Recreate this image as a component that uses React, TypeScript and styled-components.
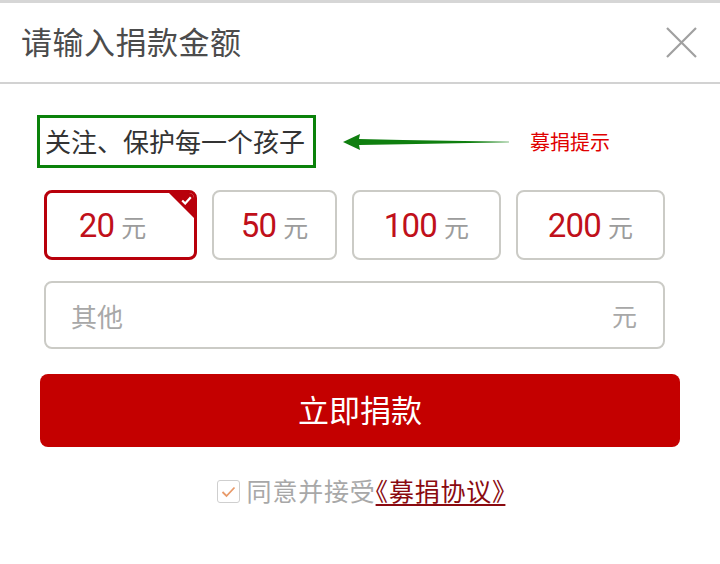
import React, { useState } from "react";
import styled, { createGlobalStyle } from "styled-components";

const GlobalStyle = createGlobalStyle`
  body {
    margin: 0;
    background: #fff;
    font-family: "Noto Sans CJK SC", "Noto Sans", sans-serif;
  }
`;

const Page = styled.div`
  width: 720px;
  height: 564px;
  background: #fff;
  border-top: 3px solid #d6d6d6;
  box-sizing: border-box;
  overflow: hidden;
`;

const Header = styled.div`
  display: flex;
  align-items: center;
  justify-content: space-between;
  height: 79px;
  padding: 0 22px 0 21px;
  border-bottom: 2px solid #d2d2d2;
`;

const Title = styled.h1`
  margin: -5px 0 0 0;
  font-size: 31px;
  font-weight: 400;
  color: #4c4c4c;
  letter-spacing: 0.5px;
`;

const CloseButton = styled.button`
  width: 34px;
  height: 34px;
  padding: 0;
  border: none;
  background: none;
  display: flex;
  align-items: center;
  justify-content: center;
`;

const Body = styled.div`
  display: flex;
  flex-direction: column;
  padding-top: 31px;
`;

const HintRow = styled.div`
  display: flex;
  align-items: center;
  padding-left: 37px;
  height: 53px;
`;

const HintBox = styled.div`
  box-sizing: border-box;
  height: 53px;
  width: 279px;
  border: 3px solid #0a820a;
  display: flex;
  align-items: center;
  padding: 0 0 2px 5px;
  font-size: 26px;
  color: #333;
  white-space: nowrap;
`;

const ArrowWrap = styled.div`
  margin-left: 27px;
  display: flex;
  align-items: center;
`;

const HintLabel = styled.span`
  margin-left: 19px;
  font-size: 20px;
  color: #e00000;
`;

const AmountGrid = styled.div`
  display: grid;
  grid-template-columns: 153px 125px 149px 149px;
  gap: 15px;
  padding-left: 44px;
  margin-top: 22px;
`;

const AmountButton = styled.button<{ $active?: boolean }>`
  position: relative;
  box-sizing: border-box;
  height: 70px;
  border-radius: 8px;
  border: ${(p) => (p.$active ? "3px solid #b8000b" : "2px solid #cbcbc6")};
  background: #fff;
  display: flex;
  align-items: center;
  justify-content: center;
  gap: 7px;
  padding: 0 ${(p) => (p.$active ? "16px" : "0")} 0 0;
  overflow: hidden;
  cursor: pointer;
  font-family: inherit;
`;

const Num = styled.span`
  font-family: Roboto, "Liberation Sans", sans-serif;
  font-size: 33px;
  color: #c0101a;
  letter-spacing: -0.8px;
  line-height: 1;
`;

const Unit = styled.span`
  font-size: 25px;
  color: #9c9c9c;
  line-height: 1;
  margin-top: 3px;
`;

const Corner = styled.span`
  position: absolute;
  top: -1px;
  right: -1px;
  width: 0;
  height: 0;
  border-top: 27px solid #b8000b;
  border-left: 27px solid transparent;
`;

const CornerCheck = styled.svg`
  position: absolute;
  top: 3px;
  right: 2px;
`;

const OtherField = styled.label`
  box-sizing: border-box;
  margin: 21px 55px 0 44px;
  height: 68px;
  border: 2px solid #cbcbc6;
  border-radius: 8px;
  display: flex;
  align-items: center;
  padding: 0 26px 0 23px;
`;

const OtherInput = styled.input`
  flex: 1;
  border: none;
  outline: none;
  font-family: inherit;
  font-size: 26px;
  color: #333;
  background: transparent;
  &::placeholder {
    color: #a8a8a8;
  }
`;

const OtherUnit = styled.span`
  font-size: 25px;
  color: #a8a8a8;
`;

const DonateButton = styled.button`
  margin: 25px 40px 0 40px;
  height: 73px;
  border: none;
  border-radius: 8px;
  background: #c40000;
  color: #fff;
  font-family: inherit;
  font-size: 31px;
  padding: 0 0 5px 0;
  cursor: pointer;
`;

const Agreement = styled.div`
  display: flex;
  align-items: center;
  justify-content: center;
  margin-top: 25px;
  padding-left: 2px;
  font-size: 25px;
  letter-spacing: 0.8px;
  color: #a8a8a8;
`;

const CheckBox = styled.span`
  box-sizing: border-box;
  width: 23px;
  height: 23px;
  border: 1px solid #cfcfcf;
  border-radius: 3px;
  margin: 3px 7px 0 0;
  display: flex;
  align-items: center;
  justify-content: center;
`;

const AgreementLink = styled.a`
  color: #8a0a10;
  text-decoration: underline;
  text-decoration-thickness: 2px;
  text-underline-offset: 3px;
  font-feature-settings: "halt";
`;

const amounts = [20, 50, 100, 200];

export default function App() {
  const [selected, setSelected] = useState(20);

  return (
    <>
      <GlobalStyle />
      <Page>
        <Header>
          <Title>请输入捐款金额</Title>
          <CloseButton aria-label="关闭">
            <svg width="33" height="33" viewBox="0 0 33 33">
              <path d="M2 2 L31 31 M31 2 L2 31" stroke="#a0a0a0" strokeWidth="2.2" />
            </svg>
          </CloseButton>
        </Header>
        <Body>
          <HintRow>
            <HintBox>关注、保护每一个孩子</HintBox>
            <ArrowWrap>
              <svg width="168" height="20" viewBox="0 0 168 20">
                <path
                  d="M0 10 L17 2 L16 7 L60 8 L166 9.8 L166 10.3 L60 12.3 L16 13 L17 18 Z"
                  fill="#0f7f0f"
                />
              </svg>
            </ArrowWrap>
            <HintLabel>募捐提示</HintLabel>
          </HintRow>

          <AmountGrid>
            {amounts.map((a) => (
              <AmountButton
                key={a}
                $active={selected === a}
                onClick={() => setSelected(a)}
              >
                <Num>{a}</Num>
                <Unit>元</Unit>
                {selected === a && (
                  <>
                    <Corner />
                    <CornerCheck width="11" height="9" viewBox="0 0 11 9">
                      <path d="M1.2 4.5 L4.2 7.5 L9.8 1.2" stroke="#fff" strokeWidth="2.2" fill="none" />
                    </CornerCheck>
                  </>
                )}
              </AmountButton>
            ))}
          </AmountGrid>

          <OtherField>
            <OtherInput placeholder="其他" />
            <OtherUnit>元</OtherUnit>
          </OtherField>

          <DonateButton>立即捐款</DonateButton>

          <Agreement>
            <CheckBox>
              <svg width="15" height="12" viewBox="0 0 15 12">
                <path d="M1.5 6 L5.5 10 L13.5 1.5" stroke="#e89a6a" strokeWidth="1.8" fill="none" />
              </svg>
            </CheckBox>
            同意并接受<AgreementLink href="#">《募捐协议》</AgreementLink>
          </Agreement>
        </Body>
      </Page>
    </>
  );
}
